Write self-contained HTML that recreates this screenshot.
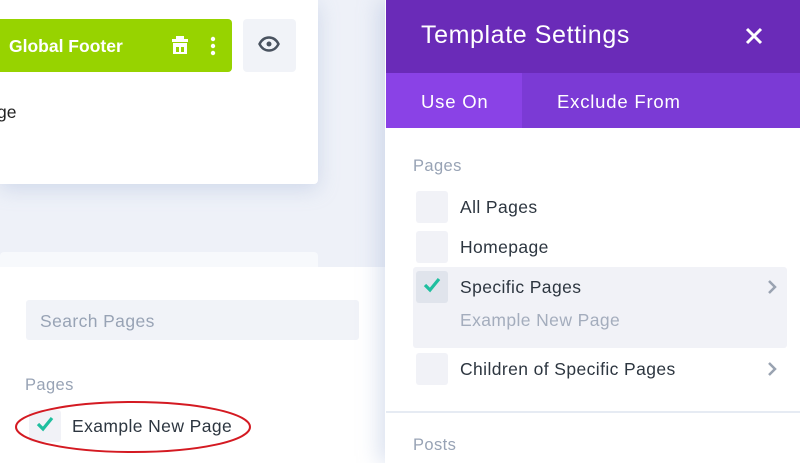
<!DOCTYPE html>
<html><head><meta charset="utf-8"><style>
*{margin:0;padding:0;box-sizing:border-box}
body{width:800px;height:463px;overflow:hidden;background:#eef1f8;font-family:"Liberation Sans",sans-serif;position:relative}
.abs{position:absolute}
.cb{position:absolute;width:32px;height:32px;border-radius:3px;background:#f1f2f7}
.t{position:absolute;font-size:17.5px;color:#2d3640;white-space:nowrap;letter-spacing:0.4px}
.lbl{position:absolute;font-size:16.5px;color:#98a3b5;letter-spacing:0.4px}
</style></head><body>
<div class="abs" style="left:0;top:0;width:318px;height:184px;background:#fff;border-radius:0 0 4px 0;box-shadow:0 5px 20px rgba(150,170,210,.35)"></div>
<div class="abs" style="left:0;top:19px;width:232px;height:53px;background:#97d300;border-radius:0 4px 4px 0"></div>
<div class="t" style="left:9px;top:36px;color:#fff;font-size:17.5px;font-weight:bold;letter-spacing:0">Global Footer</div>
<svg class="abs" style="left:170px;top:35px" width="20" height="22" viewBox="0 0 20 22"><rect x="6" y="1" width="8" height="3" fill="#fff"/><rect x="2" y="4" width="16" height="3" fill="#fff"/><rect x="3" y="8" width="14" height="11" fill="#fff"/><rect x="6" y="12" width="3" height="5" fill="#97d300"/><rect x="11" y="12" width="3" height="5" fill="#97d300"/></svg>
<svg class="abs" style="left:209px;top:36px" width="8" height="20"><circle cx="4" cy="3" r="2.2" fill="#fff"/><circle cx="4" cy="10" r="2.2" fill="#fff"/><circle cx="4" cy="17" r="2.2" fill="#fff"/></svg>
<div class="abs" style="left:243px;top:19px;width:53px;height:53px;background:#f1f3f8;border-radius:4px"></div>
<svg class="abs" style="left:258px;top:36px" width="22" height="16" viewBox="0 0 22 16"><path d="M1.5 8C4 3 7.5 1.5 11 1.5S18 3 20.5 8C18 13 14.5 14.5 11 14.5S4 13 1.5 8Z" fill="none" stroke="#4a5360" stroke-width="2.5"/><circle cx="11" cy="8" r="2.5" fill="#4a5360"/></svg>
<div class="t" style="left:-3px;top:102px;color:#222;letter-spacing:0">ge</div>
<div class="abs" style="left:0;top:252px;width:318px;height:30px;background:#f7f9fc;border-radius:4px"></div>
<div class="abs" style="left:0;top:267px;width:385px;height:196px;background:#fff"></div>
<div class="abs" style="left:26px;top:300px;width:333px;height:40px;background:#f1f3f8;border-radius:3px"></div>
<div class="lbl" style="left:40px;top:311px;font-size:17.5px">Search Pages</div>
<div class="lbl" style="left:25px;top:376px">Pages</div>
<div class="cb" style="left:29px;top:410px"></div>
<svg class="abs" style="left:36px;top:416px" width="18" height="16"><path d="M2 8l5 5 9-11" fill="none" stroke="#1fbf9f" stroke-width="3.2"/></svg>
<div class="t" style="left:72px;top:416px">Example New Page</div>
<svg class="abs" style="left:12px;top:398px" width="242" height="58"><ellipse cx="121" cy="29" rx="117" ry="25" fill="none" stroke="#d41a22" stroke-width="2"/></svg>

<div class="abs" style="left:385px;top:0;width:415px;height:463px;background:#fff;box-shadow:-6px 0 20px rgba(150,170,210,.35)"></div>
<div class="abs" style="left:386px;top:0;width:414px;height:73px;background:#6a2bb8"></div>
<div class="t" style="left:421px;top:21px;color:#fff;font-size:25px;letter-spacing:0.6px">Template Settings</div>
<svg class="abs" style="left:745px;top:27px" width="18" height="18"><path d="M2 2l14 14M16 2L2 16" stroke="#fff" stroke-width="3"/></svg>
<div class="abs" style="left:386px;top:73px;width:414px;height:55px;background:#7b3ad5"></div>
<div class="abs" style="left:386px;top:73px;width:136px;height:55px;background:#8a42e6"></div>
<div class="t" style="left:421px;top:91px;color:#fff;font-size:18.5px;letter-spacing:0.8px">Use On</div>
<div class="t" style="left:557px;top:91px;color:#fff;font-size:18.5px;letter-spacing:0.8px">Exclude From</div>
<div class="lbl" style="left:413px;top:157px">Pages</div>
<div class="cb" style="left:416px;top:191px"></div>
<div class="t" style="left:460px;top:197px">All Pages</div>
<div class="cb" style="left:416px;top:231px"></div>
<div class="t" style="left:460px;top:237px">Homepage</div>
<div class="abs" style="left:413px;top:267px;width:374px;height:81px;background:#f1f2f7;border-radius:3px"></div>
<div class="cb" style="left:416px;top:271px;background:#e0e4ec"></div>
<svg class="abs" style="left:423px;top:277px" width="18" height="16"><path d="M2 8l5 5 9-11" fill="none" stroke="#1fbf9f" stroke-width="3.2"/></svg>
<div class="t" style="left:460px;top:277px">Specific Pages</div>
<div class="t" style="left:460px;top:310px;color:#a4adbd">Example New Page</div>
<svg class="abs" style="left:767px;top:279px" width="10" height="16"><path d="M2 2l6 6-6 6" fill="none" stroke="#9aa3b1" stroke-width="2.5"/></svg>
<div class="cb" style="left:416px;top:353px"></div>
<div class="t" style="left:460px;top:359px">Children of Specific Pages</div>
<svg class="abs" style="left:767px;top:361px" width="10" height="16"><path d="M2 2l6 6-6 6" fill="none" stroke="#9aa3b1" stroke-width="2.5"/></svg>
<div class="abs" style="left:386px;top:411px;width:414px;height:2px;background:#e6ebf3"></div>
<div class="lbl" style="left:413px;top:436px">Posts</div>
</body></html>
